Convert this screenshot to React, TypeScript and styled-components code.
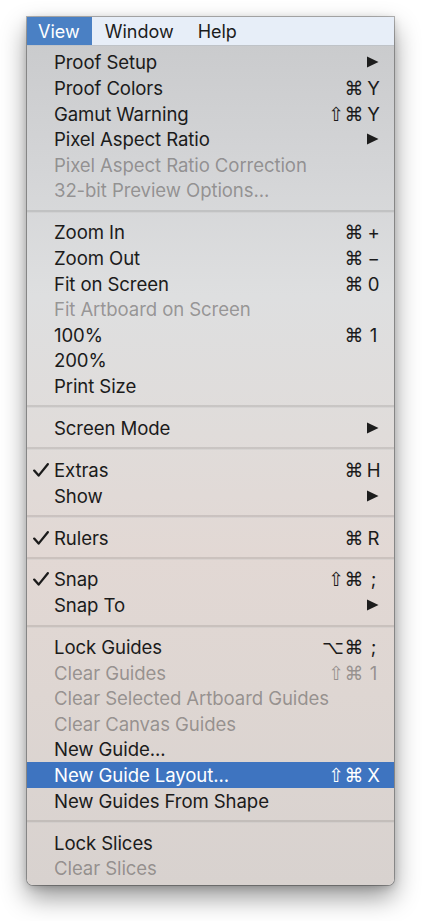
import React from "react";
import styled, { createGlobalStyle } from "styled-components";

const Global = createGlobalStyle`
  html, body { margin: 0; padding: 0; background: #ffffff; }
  body { font-family: Inter, "Noto Sans", "DejaVu Sans", sans-serif; }
`;

const Page = styled.div`
  padding: 17px 0 0 27px;
  width: 423px;
  height: 921px;
  box-sizing: border-box;
`;

const Window = styled.div`
  width: 367px;
  height: 868px;
  box-sizing: border-box;
  border-radius: 0 0 6px 6px;
  overflow: hidden;
  background: linear-gradient(
    180deg,
    #c8c9cb 0%,
    #d4d5d7 18%,
    #dedfe0 32%,
    #e0dcda 48%,
    #e2d8d4 62%,
    #ded6d2 78%,
    #d8d2cf 100%
  );
  box-shadow: 0 0 0 1px rgba(0, 0, 0, 0.28), 0 12px 26px rgba(0, 0, 0, 0.42),
    0 2px 8px rgba(0, 0, 0, 0.18);
  display: flex;
  flex-direction: column;
`;

const MenuBar = styled.div`
  height: 29px;
  display: flex;
  align-items: stretch;
  background: #e7eef8;
  border-bottom: 1px solid #bfc3c8;
  box-sizing: border-box;
`;

const BarItem = styled.div<{ $active?: boolean }>`
  display: flex;
  align-items: center;
  padding: 2px ${(p) => (p.$active ? "12px" : "11px")} 0
    ${(p) => (p.$active ? "11px" : "13px")};
  font-size: 18px;
  color: ${(p) => (p.$active ? "#ffffff" : "#1c1c1c")};
  background: ${(p) => (p.$active ? "#4a80c4" : "transparent")};
`;

const List = styled.div`
  padding: 4px 0 4px 0;
  display: flex;
  flex-direction: column;
`;

const Row = styled.div<{ $disabled?: boolean; $selected?: boolean }>`
  height: 25.6px;
  display: flex;
  align-items: center;
  font-size: 18.6px;
  letter-spacing: -0.1px;
  color: ${(p) =>
    p.$selected ? "#ffffff" : p.$disabled ? "rgba(90, 86, 86, 0.55)" : "#1b1b1b"};
  background: ${(p) => (p.$selected ? "#3e74c0" : "transparent")};
  padding-right: 12px;
`;

const CheckCol = styled.div`
  width: 27px;
  display: flex;
  align-items: center;
  justify-content: flex-end;
`;

const Label = styled.div`
  flex: 1;
  white-space: nowrap;
`;

const Mods = styled.span`
  font-family: "DejaVu Sans", sans-serif;
  font-size: 19px;
  letter-spacing: 0.5px;
`;

const Key = styled.span`
  width: 17px;
  text-align: center;
  margin-left: 1px;
`;

const Shortcut = styled.div`
  display: flex;
  align-items: center;
  justify-content: flex-end;
`;

const Separator = styled.div`
  height: 16.4px;
  display: flex;
  align-items: center;
  &::after {
    content: "";
    flex: 1;
    height: 2px;
    background: rgba(0, 0, 0, 0.1);
    border-bottom: 1px solid rgba(255, 255, 255, 0.25);
  }
`;

const Arrow = () => (
  <svg width="13" height="12" viewBox="0 0 13 12" style={{ marginRight: 3 }}>
    <path d="M1 0.5 L12.5 6 L1 11.5 Z" fill="#1d1d1d" />
  </svg>
);

const Check = () => (
  <svg width="16" height="14" viewBox="0 0 16 14" style={{ marginRight: 5 }}>
    <path
      d="M1.2 7.6 L5.6 12.6 L14.8 1.2"
      fill="none"
      stroke="#1b1b1b"
      strokeWidth="2.3"
      strokeLinecap="round"
      strokeLinejoin="round"
    />
  </svg>
);

type Item =
  | "sep"
  | {
      label: string;
      mods?: string;
      key?: string;
      sub?: boolean;
      disabled?: boolean;
      checked?: boolean;
      selected?: boolean;
    };

const items: Item[] = [
  { label: "Proof Setup", sub: true },
  { label: "Proof Colors", mods: "⌘", key: "Y" },
  { label: "Gamut Warning", mods: "⇧⌘", key: "Y" },
  { label: "Pixel Aspect Ratio", sub: true },
  { label: "Pixel Aspect Ratio Correction", disabled: true },
  { label: "32-bit Preview Options...", disabled: true },
  "sep",
  { label: "Zoom In", mods: "⌘", key: "+" },
  { label: "Zoom Out", mods: "⌘", key: "−" },
  { label: "Fit on Screen", mods: "⌘", key: "0" },
  { label: "Fit Artboard on Screen", disabled: true },
  { label: "100%", mods: "⌘", key: "1" },
  { label: "200%" },
  { label: "Print Size" },
  "sep",
  { label: "Screen Mode", sub: true },
  "sep",
  { label: "Extras", mods: "⌘", key: "H", checked: true },
  { label: "Show", sub: true },
  "sep",
  { label: "Rulers", mods: "⌘", key: "R", checked: true },
  "sep",
  { label: "Snap", mods: "⇧⌘", key: ";", checked: true },
  { label: "Snap To", sub: true },
  "sep",
  { label: "Lock Guides", mods: "⌥⌘", key: ";" },
  { label: "Clear Guides", mods: "⇧⌘", key: "1", disabled: true },
  { label: "Clear Selected Artboard Guides", disabled: true },
  { label: "Clear Canvas Guides", disabled: true },
  { label: "New Guide..." },
  { label: "New Guide Layout...", mods: "⇧⌘", key: "X", selected: true },
  { label: "New Guides From Shape" },
  "sep",
  { label: "Lock Slices" },
  { label: "Clear Slices", disabled: true },
];

export default function App() {
  return (
    <>
      <Global />
      <Page>
        <Window>
          <MenuBar>
            <BarItem $active>View</BarItem>
            <BarItem>Window</BarItem>
            <BarItem>Help</BarItem>
          </MenuBar>
          <List>
            {items.map((it, i) =>
              it === "sep" ? (
                <Separator key={i} />
              ) : (
                <Row key={i} $disabled={it.disabled} $selected={it.selected}>
                  <CheckCol>{it.checked ? <Check /> : null}</CheckCol>
                  <Label>{it.label}</Label>
                  {it.sub ? (
                    <Arrow />
                  ) : it.key ? (
                    <Shortcut>
                      <Mods>{it.mods}</Mods>
                      <Key>{it.key}</Key>
                    </Shortcut>
                  ) : null}
                </Row>
              )
            )}
          </List>
        </Window>
      </Page>
    </>
  );
}
